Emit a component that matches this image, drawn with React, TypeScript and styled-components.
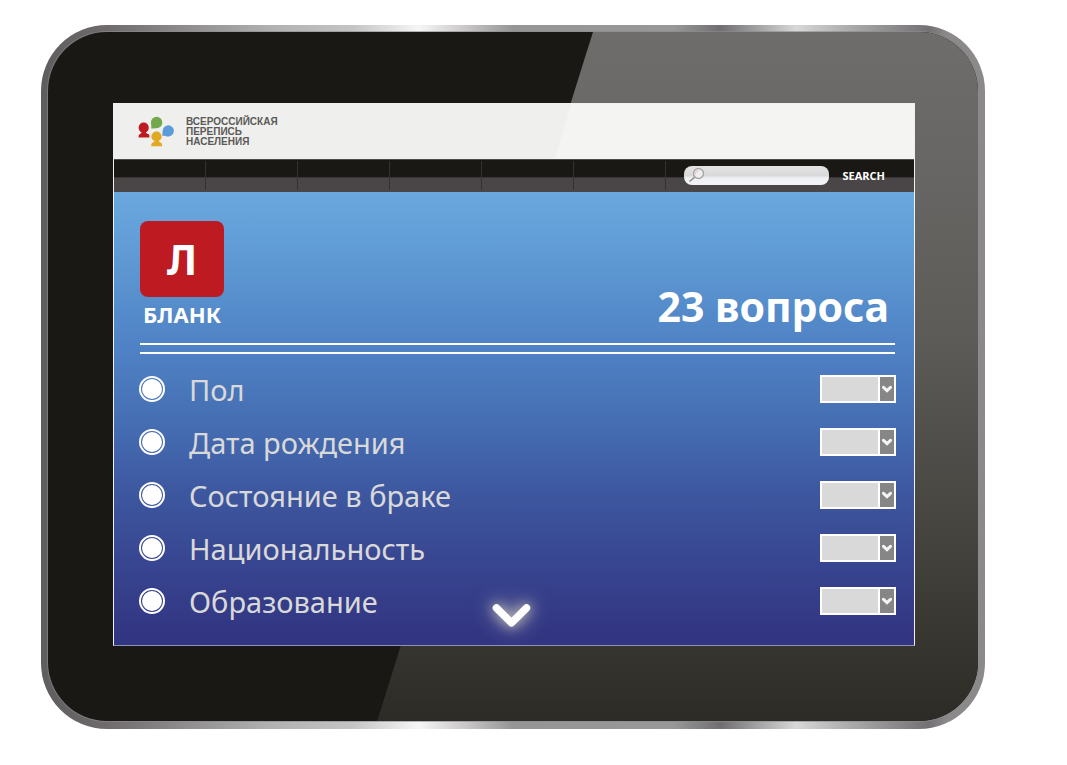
import React from "react";
import styled, { createGlobalStyle } from "styled-components";

const GlobalStyle = createGlobalStyle`
  *, *::before, *::after { box-sizing: border-box; }
  body {
    margin: 0;
    background: #ffffff;
    font-family: "Noto Sans", "Open Sans", sans-serif;
  }
`;

const Page = styled.main`
  padding: 25px 82px 36px 41px;
`;

const Frame = styled.div`
  padding: 7px 7px 8px;
  border-radius: 66px;
  background: linear-gradient(
    90deg,
    #5f5d5f 0%,
    #6f6b6c 7%,
    #b0b0b0 24%,
    #c4c4c5 33%,
    #f6f6f6 40%,
    #c9c7c7 45%,
    #959595 50%,
    #989898 67%,
    #706e71 72%,
    #d8d8d8 80%,
    #b0b0b0 85%,
    #747174 94%,
    #8c898b 96%,
    #8c898b 100%
  );
`;

const Bezel = styled.div`
  position: relative;
  padding: 71px 63px 75px 65px;
  border-radius: 59px;
  background: #1a1814;
  overflow: hidden;
  box-shadow: 0 0 0 1px rgba(140, 138, 138, 0.6);

  &::before {
    content: "";
    position: absolute;
    inset: 0;
    background: linear-gradient(180deg, #6e6d6b 0%, #686664 20%, #5c5b57 45%, #403f3a 78%, #2d2b26 100%);
    clip-path: polygon(58.6% 0, 100% 0, 100% 100%, 35.4% 100%);
  }
`;

const Screen = styled.div`
  position: relative;
  border: 1px solid #f0f0ee;
  border-bottom-color: #8f90b8;
`;

const Header = styled.header`
  display: flex;
  align-items: center;
  gap: 12px;
  height: 55px;
  padding-left: 24px;
  background: linear-gradient(107deg, #efefed 56%, #f4f4f2 56%);
`;

const Brand = styled.p`
  display: flex;
  flex-direction: column;
  margin: 0;
  color: #5b5a58;
  font-family: "Liberation Sans", sans-serif;
  font-size: 10px;
  font-weight: 700;
  line-height: 10px;
`;

const NavBar = styled.nav`
  display: flex;
  align-items: center;
  height: 33px;
  padding-right: 29px;
  background: linear-gradient(180deg, #4d4c49 0 1px, #1a1814 1px 18px, #383534 18px 19px, #4a4647 19px);
`;

const Tabs = styled.ul`
  display: flex;
  flex: 1;
  align-self: stretch;
  margin: 0;
  padding: 2px 0;
  list-style: none;
`;

const Tab = styled.li`
  flex: 0 1 92px;
  border-right: 1px solid #34312f;
`;

const SearchForm = styled.form`
  display: flex;
  align-items: center;
  gap: 14px;
`;

const SearchBox = styled.label`
  display: flex;
  align-items: center;
  width: 145px;
  height: 19px;
  padding: 0 6px 0 4px;
  border-radius: 8px;
  background: linear-gradient(180deg, #e4e4e4 0, #d9d9d9 50%, #f0f1f5 65%, #f2f3f7 100%);
`;

const SearchInput = styled.input`
  flex: 1;
  min-width: 0;
  padding: 0 4px;
  border: 0;
  outline: 0;
  background: transparent;
  color: #333333;
  font: 11px "Noto Sans", sans-serif;
`;

const SearchButton = styled.button`
  padding: 0;
  border: 0;
  background: none;
  color: #ffffff;
  font: 700 11px/16px "Open Sans", sans-serif;
  cursor: pointer;
`;

const Content = styled.section`
  height: 453px;
  padding: 29px 18px 0 25px;
  background: linear-gradient(
    180deg,
    #6aa8df 0%,
    #5c96d1 18%,
    #548aca 27%,
    #4e80c3 36%,
    #466fb3 50%,
    #3d58a0 66%,
    #384590 82%,
    #323582 98%
  );
`;

const FormHead = styled.div`
  display: flex;
  justify-content: space-between;
  align-items: flex-end;
  height: 113px;
  padding: 0 7px 0 1px;
`;

const Blank = styled.div`
  display: flex;
  flex-direction: column;
  align-items: center;
  align-self: flex-start;
  width: 84px;
  color: #ffffff;
  font-weight: 700;
`;

const Letter = styled.span`
  display: flex;
  justify-content: center;
  align-items: center;
  width: 100%;
  height: 76px;
  border-radius: 8px;
  background: #be1a21;
  font-size: 41px;
  line-height: 48px;
`;

const Caption = styled.span`
  margin-top: 3px;
  font-size: 22px;
  line-height: 28px;
`;

const Title = styled.h1`
  margin: 0;
  color: #ffffff;
  font-size: 41px;
  font-weight: 700;
  line-height: 56px;
`;

const Rule = styled.hr`
  height: 11px;
  margin: 9px 1px 8px;
  border: solid #ffffff;
  border-width: 2px 0;
`;

const Questions = styled.ul`
  margin: 0;
  padding: 0;
  list-style: none;
`;

const Question = styled.li`
  display: flex;
  align-items: center;
  justify-content: space-between;
  height: 53px;
`;

const Choice = styled.label`
  display: flex;
  align-items: center;
  gap: 24px;
  cursor: pointer;
`;

const QuestionText = styled.span`
  padding-top: 2px;
  color: #d9d9d9;
  font-size: 29px;
  line-height: 40px;
`;

const Radio = styled.input`
  appearance: none;
  width: 26px;
  height: 26px;
  margin: 0;
  padding: 1px;
  border: 2px solid #ffffff;
  border-radius: 50%;
  background: #ffffff content-box;
`;

const Picker = styled.span`
  position: relative;
  display: flex;
  width: 76px;
  height: 28px;
`;

const Select = styled.select`
  appearance: none;
  width: 100%;
  border: 2px solid #ffffff;
  border-radius: 0;
  background: linear-gradient(90deg, #d9d9d9 0 56px, #ffffff 56px 58px, #868686 58px);
  color: #444444;
`;

const PickerArrow = styled.svg`
  position: absolute;
  top: 10px;
  right: 4px;
  pointer-events: none;
`;

const MoreButton = styled.button`
  position: absolute;
  bottom: 16px;
  left: 50%;
  display: flex;
  margin-left: -22px;
  padding: 0;
  border: 0;
  background: none;
  cursor: pointer;

  svg {
    overflow: visible;
    filter: drop-shadow(0 0 6px rgba(255, 248, 205, 0.6)) drop-shadow(0 0 10px rgba(255, 248, 205, 0.6));
  }
`;

const BrandLogo = () => (
  <svg width="36" height="31" viewBox="0 0 36 31" aria-hidden="true">
    <g fill="#be1a21">
      <circle cx="5.7" cy="11.7" r="5.1" />
      <path d="M3.800 15.500h4c-.2 2.600 3.300 1.800 3.600 4.100v2H.6v-1.800c.3-1.900 3.400-2 3.200-4.300z" />
    </g>
    <g fill="#73a94c">
      <circle cx="18.600" cy="6.500" r="5.700" />
      <path d="M13 7.500c.5 1.800.400 3.200.1 4.900 2.200 0 4.200.100 6-.3z" />
    </g>
    <g fill="#5c9bd8">
      <circle cx="30.300" cy="14.900" r="5.600" />
      <path d="M24.700 15c.1 1.500-.2 3.200-.7 4.600 2.500.400 4.800.900 6.500.800z" />
    </g>
    <g fill="#e2a822">
      <circle cx="18.500" cy="20.500" r="5.100" />
      <path d="M16.700 24.300h4c-.2 2.600 3 1.700 3.300 4v1.900H13.300v-1.700c.3-1.900 3.500-2 3.400-4.200z" />
    </g>
  </svg>
);

const Magnifier = () => (
  <svg width="18" height="17" viewBox="0 0 18 17" aria-hidden="true">
    <path d="M7 10 1.500 14.500" stroke="#8d8b8d" strokeWidth="1.500" fill="none" />
    <circle cx="10.500" cy="6.500" r="5" fill="#efeded" stroke="#a9a7a7" strokeWidth="1.500" />
    <path d="M7 8a4 4 0 0 1 4-5L8 6z" fill="#e3c4c4" />
  </svg>
);

const brandLines = ["ВСЕРОССИЙСКАЯ", "ПЕРЕПИСЬ", "НАСЕЛЕНИЯ"];
const questions = ["Пол", "Дата рождения", "Состояние в браке", "Национальность", "Образование"];
const tabs = [1, 2, 3, 4, 5, 6];

export default function App() {
  return (
    <Page>
      <GlobalStyle />
      <Frame>
        <Bezel>
          <Screen>
            <Header>
              <BrandLogo />
              <Brand>
                {brandLines.map((line) => (
                  <span key={line}>{line}</span>
                ))}
              </Brand>
            </Header>
            <NavBar>
              <Tabs>
                {tabs.map((tab) => (
                  <Tab key={tab} />
                ))}
              </Tabs>
              <SearchForm onSubmit={(event) => event.preventDefault()}>
                <SearchBox>
                  <Magnifier />
                  <SearchInput type="text" aria-label="Search" />
                </SearchBox>
                <SearchButton type="submit">SEARCH</SearchButton>
              </SearchForm>
            </NavBar>
            <Content>
              <FormHead>
                <Blank>
                  <Letter>Л</Letter>
                  <Caption>БЛАНК</Caption>
                </Blank>
                <Title>23 вопроса</Title>
              </FormHead>
              <Rule />
              <Questions>
                {questions.map((question) => (
                  <Question key={question}>
                    <Choice>
                      <Radio type="radio" name="question" />
                      <QuestionText>{question}</QuestionText>
                    </Choice>
                    <Picker>
                      <Select aria-label={question} />
                      <PickerArrow width="10" height="8" viewBox="0 0 10 8" aria-hidden="true">
                        <path d="M1.500 2.300 5 5.600 8.500 2.300" fill="none" stroke="#f4f4f4" strokeWidth="3" strokeLinecap="round" />
                      </PickerArrow>
                    </Picker>
                  </Question>
                ))}
              </Questions>
            </Content>
            <MoreButton type="button" aria-label="Далее">
              <svg width="40" height="26" viewBox="0 0 40 26" aria-hidden="true">
                <path d="M4.500 5 19.500 19.800 34.500 5" fill="none" stroke="#ffffff" strokeWidth="7.500" strokeLinecap="round" strokeLinejoin="round" />
              </svg>
            </MoreButton>
          </Screen>
        </Bezel>
      </Frame>
    </Page>
  );
}
